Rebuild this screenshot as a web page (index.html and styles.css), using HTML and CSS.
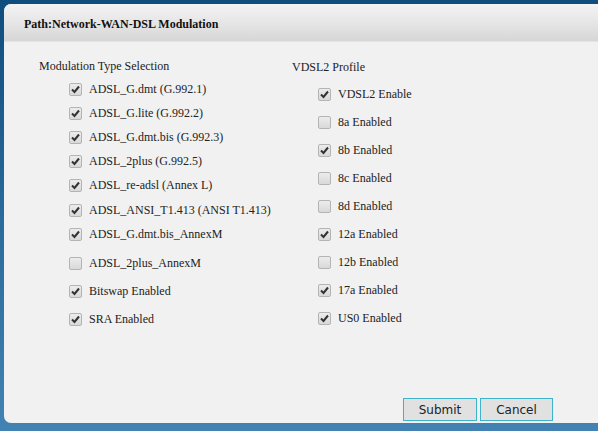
FILE: index.html
```html
<!DOCTYPE html>
<html>
<head>
<meta charset="utf-8">
<link rel="stylesheet" href="styles.css">
</head>
<body>
<div class="dialog">
  <div class="header">Path:Network-WAN-DSL Modulation</div>
  <div class="content">
    <div class="col left">
      <div class="title">Modulation Type Selection</div>
      <label class="row"><input type="checkbox" checked><span>ADSL_G.dmt (G.992.1)</span></label>
      <label class="row"><input type="checkbox" checked><span>ADSL_G.lite (G.992.2)</span></label>
      <label class="row"><input type="checkbox" checked><span>ADSL_G.dmt.bis (G.992.3)</span></label>
      <label class="row"><input type="checkbox" checked><span>ADSL_2plus (G.992.5)</span></label>
      <label class="row"><input type="checkbox" checked><span>ADSL_re-adsl (Annex L)</span></label>
      <label class="row"><input type="checkbox" checked><span>ADSL_ANSI_T1.413 (ANSI T1.413)</span></label>
      <label class="row"><input type="checkbox" checked><span>ADSL_G.dmt.bis_AnnexM</span></label>
      <label class="row tall first-tall"><input type="checkbox"><span>ADSL_2plus_AnnexM</span></label>
      <label class="row tall"><input type="checkbox" checked><span>Bitswap Enabled</span></label>
      <label class="row tall"><input type="checkbox" checked><span>SRA Enabled</span></label>
    </div>
    <div class="col right">
      <div class="title">VDSL2 Profile</div>
      <label class="row vrow"><input type="checkbox" checked><span>VDSL2 Enable</span></label>
      <label class="row vrow"><input type="checkbox"><span>8a Enabled</span></label>
      <label class="row vrow"><input type="checkbox" checked><span>8b Enabled</span></label>
      <label class="row vrow"><input type="checkbox"><span>8c Enabled</span></label>
      <label class="row vrow"><input type="checkbox"><span>8d Enabled</span></label>
      <label class="row vrow"><input type="checkbox" checked><span>12a Enabled</span></label>
      <label class="row vrow"><input type="checkbox"><span>12b Enabled</span></label>
      <label class="row vrow"><input type="checkbox" checked><span>17a Enabled</span></label>
      <label class="row vrow"><input type="checkbox" checked><span>US0 Enabled</span></label>
    </div>
  </div>
  <div class="actions">
    <button class="btn" type="button">Submit</button>
    <button class="btn" type="button">Cancel</button>
  </div>
</div>
</body>
</html>
```
FILE: styles.css
```css
html, body {
  margin: 0;
  padding: 0;
  height: 100%;
}
body {
  background: linear-gradient(to bottom, #0f4d7d 0%, #2a6a9c 50%, #4383b3 100%);
  overflow: hidden;
  font-family: "Liberation Serif", "Times New Roman", serif;
  color: #222;
}
.dialog {
  margin: 4px 0 0 4px;
  width: 610px;
  height: 419px;
  background: #f1f1f1;
  border-radius: 7px 0 0 7px;
  display: flex;
  flex-direction: column;
  overflow: hidden;
}
.header {
  height: 37px;
  flex: none;
  background: linear-gradient(to bottom, #f3f3f3 0%, #e6e6e6 50%, #d6d6d6 100%);
  border-bottom: 1px solid #e4e4e4;
  padding-left: 20px;
  font-weight: bold;
  font-size: 12px;
  line-height: 40px;
  color: #111;
}
.content {
  display: flex;
  flex: 1;
  padding-top: 16px;
}
.col {
  display: flex;
  flex-direction: column;
}
.left {
  width: 253px;
  padding-left: 35px;
}
.right {
  padding-top: 1px;
}
.title {
  font-size: 12px;
  line-height: 16px;
  height: 16px;
  margin-bottom: 3px;
}
.row {
  display: flex;
  align-items: center;
  height: 24.2px;
  padding-left: 30px;
  font-size: 12px;
}
.row span {
  margin-left: 7px;
}
.left .row.tall {
  height: 28px;
}
.left .row.first-tall {
  margin-top: 3px;
}
.right .row {
  height: 28px;
  padding-left: 26px;
}
.right .title {
  margin-bottom: 5px;
}
input[type="checkbox"] {
  -webkit-appearance: none;
  appearance: none;
  width: 13px;
  height: 13px;
  margin: 0;
  border: 1px solid #b4b4b4;
  border-radius: 2px;
  background: linear-gradient(to bottom, #ececec, #d9d9d9);
  flex: none;
}
input[type="checkbox"]:checked {
  background-image: url("data:image/svg+xml;utf8,<svg xmlns='http://www.w3.org/2000/svg' viewBox='0 0 11 11'><path d='M2 5.5 L4.5 8 L9 2.5' fill='none' stroke='%23333' stroke-width='2'/></svg>"), linear-gradient(to bottom, #ececec, #d9d9d9);
  background-size: 11px 11px, 100% 100%;
  background-repeat: no-repeat;
}
.actions {
  display: flex;
  justify-content: flex-end;
  gap: 3px;
  padding: 0 61px 2px 0;
}
.btn {
  width: 74px;
  height: 23px;
  margin: 0;
  padding: 0;
  border: 1px solid #3fb3c9;
  background: #e1e1e1;
  font-family: "DejaVu Sans", Tahoma, sans-serif;
  font-size: 12px;
  color: #222;
}
.btn + .btn {
  width: 73px;
}
```
